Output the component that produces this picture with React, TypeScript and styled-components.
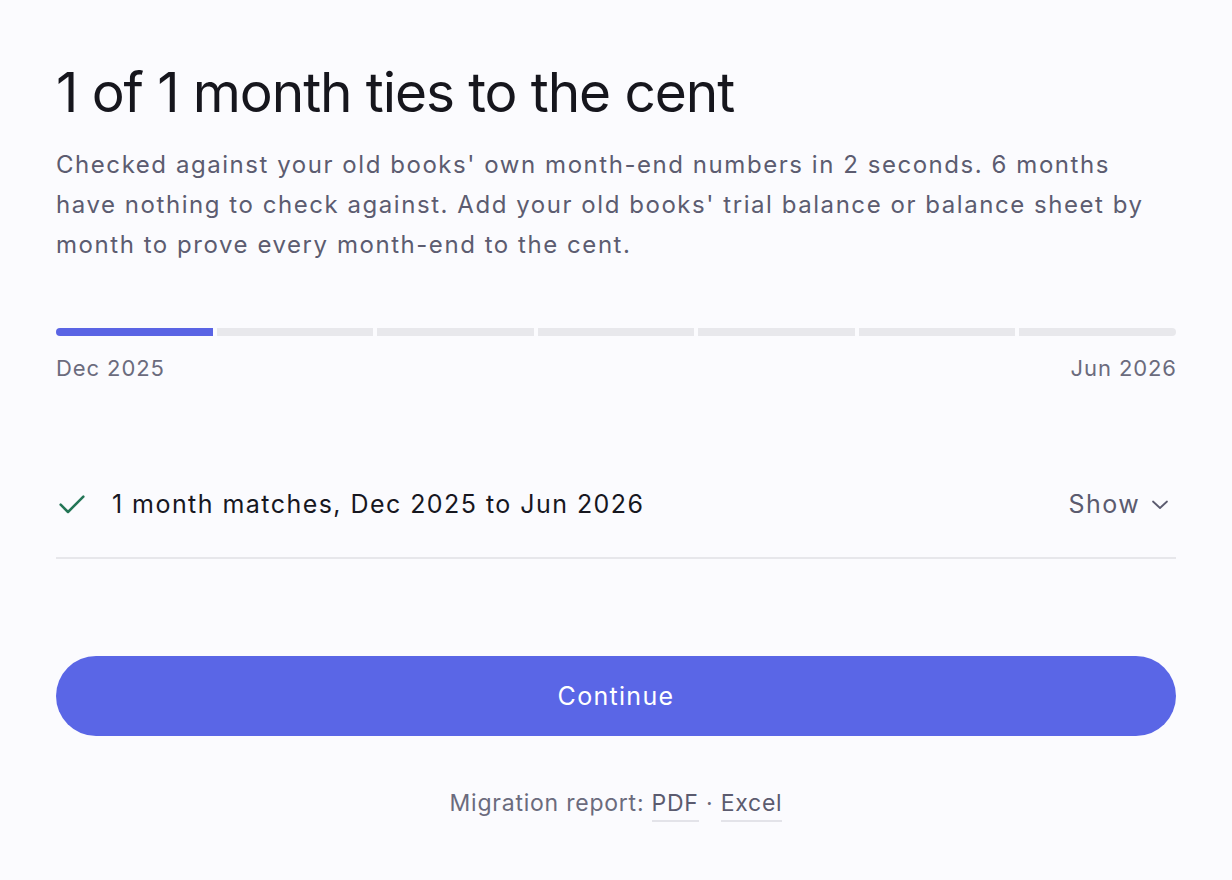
import React from "react";
import styled, { createGlobalStyle } from "styled-components";

const GlobalStyle = createGlobalStyle`
  html, body {
    margin: 0;
    padding: 0;
    background: #fbfbfe;
  }
  body {
    font-family: Inter, "Liberation Sans", Arial, sans-serif;
    -webkit-font-smoothing: antialiased;
  }
`;

const months = ["Dec", "Jan", "Feb", "Mar", "Apr", "May", "Jun"];
const matched = 1;

const App = () => {
  return (
    <>
      <GlobalStyle />
      <Page>
        <Title>1 of 1 month ties to the cent</Title>
        <Lead>
          Checked against your old books' own month-end numbers in 2 seconds. 6 months
          have nothing to check against. Add your old books' trial balance or balance sheet by
          month to prove every month-end to the cent.
        </Lead>

        <Timeline>
          <Segments>
            {months.map((m, i) => (
              <Segment key={m} $done={i < matched} />
            ))}
          </Segments>
          <RangeLabels>
            <span>Dec 2025</span>
            <span>Jun 2026</span>
          </RangeLabels>
        </Timeline>

        <ResultRow>
          <CheckIcon viewBox="0 0 24 24">
            <path d="M3.5 12.5L9 18L20.5 6.5" />
          </CheckIcon>
          <ResultText>1 month matches, Dec 2025 to Jun 2026</ResultText>
          <ShowButton type="button">
            Show
            <svg viewBox="0 0 24 24" width="24" height="24">
              <path d="M5 9.5L12 16L19 9.5" />
            </svg>
          </ShowButton>
        </ResultRow>

        <ContinueButton type="button">Continue</ContinueButton>

        <Footer>
          Migration report: <FooterLink href="#">PDF</FooterLink> ·{" "}
          <FooterLink href="#">Excel</FooterLink>
        </Footer>
      </Page>
    </>
  );
};

const Page = styled.main`
  box-sizing: border-box;
  width: 1232px;
  min-height: 880px;
  padding: 59px 56px 0;
  display: flex;
  flex-direction: column;
`;

const Title = styled.h1`
  margin: 0;
  font-size: 55px;
  line-height: 66px;
  font-weight: 400;
  letter-spacing: -0.02em;
  color: #16161d;
`;

const Lead = styled.p`
  margin: 20px 0 0;
  max-width: 1100px;
  font-size: 24px;
  line-height: 40px;
  letter-spacing: 1.55px;
  color: #5c5c70;
`;

const Timeline = styled.div`
  margin-top: 63px;
  display: flex;
  flex-direction: column;
  gap: 18px;
`;

const Segments = styled.div`
  display: flex;
  gap: 4px;
  height: 8px;
  border-radius: 4px;
  overflow: hidden;
`;

const Segment = styled.div<{ $done: boolean }>`
  flex: 1;
  background: ${(p) => (p.$done ? "#5a64e4" : "#e8e8ec")};
`;

const RangeLabels = styled.div`
  display: flex;
  justify-content: space-between;
  font-size: 22px;
  line-height: 28px;
  letter-spacing: 0.9px;
  color: #6b6b7d;

  span:last-child {
    margin-right: -0.9px;
  }
`;

const ResultRow = styled.div`
  margin-top: 106px;
  display: flex;
  align-items: center;
  padding: 0 0 37px;
  border-bottom: 2px solid #e7e7eb;
`;

const CheckIcon = styled.svg`
  flex: none;
  width: 32px;
  height: 32px;
  margin-right: 24px;
  fill: none;
  stroke: #237556;
  stroke-width: 1.9;
  stroke-linecap: round;
  stroke-linejoin: round;
`;

const ResultText = styled.span`
  flex: 1;
  font-size: 25px;
  line-height: 32px;
  letter-spacing: 1.45px;
  color: #17171f;
`;

const ShowButton = styled.button`
  display: flex;
  align-items: center;
  gap: 8px;
  padding: 0 4px 0 0;
  border: none;
  background: none;
  font-family: inherit;
  font-size: 25px;
  line-height: 32px;
  letter-spacing: 1.4px;
  color: #5b5b6f;
  cursor: pointer;

  svg {
    fill: none;
    stroke: currentColor;
    stroke-width: 1.8;
    stroke-linecap: round;
    stroke-linejoin: round;
  }
`;

const ContinueButton = styled.button`
  margin-top: 97px;
  height: 80px;
  border: none;
  border-radius: 40px;
  background: #5a66e6;
  color: #ffffff;
  font-family: inherit;
  font-size: 25px;
  letter-spacing: 1.3px;
  cursor: pointer;
`;

const Footer = styled.p`
  margin: 52px 0 0;
  text-align: center;
  font-size: 23px;
  line-height: 30px;
  letter-spacing: 0.77px;
  color: #6b6b7d;
`;

const FooterLink = styled.a`
  color: #5b5b6f;
  text-decoration: none;
  border-bottom: 2px solid #e3e3e9;
  padding-bottom: 3px;
`;

export default App;
